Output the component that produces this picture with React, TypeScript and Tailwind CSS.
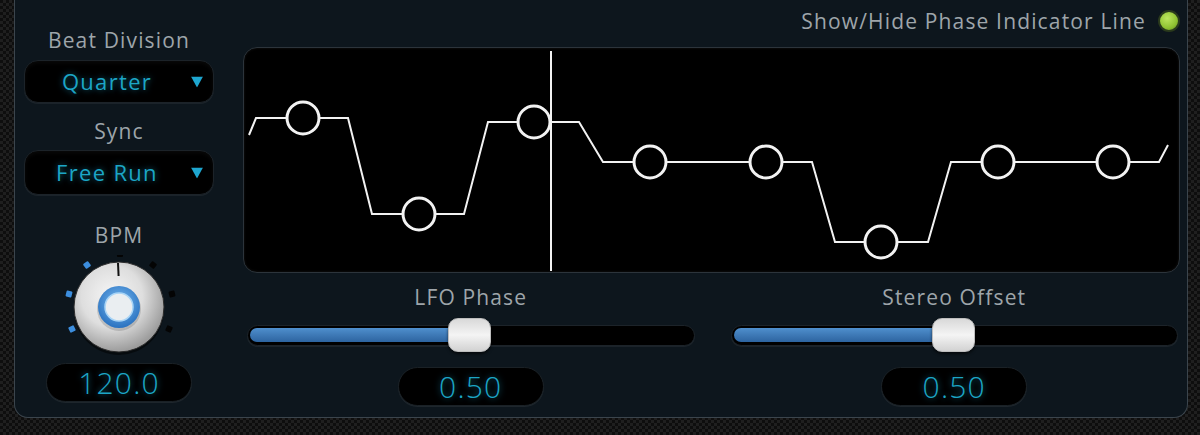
import React from "react";

const CYAN = "text-[#1ca6c6] [text-shadow:0_0_6px_rgba(30,170,215,0.6)]";
const LABEL = "text-[21px] leading-6 text-[#9ea5aa] tracking-[0.055em]";

// graph points in local coords of the black box (origin 243,47)
const wave = "M5,87 L12,70 L104,70 L128,166 L220,166 L244,74 L335,74 L359,114 L568,114 L591,194 L684,194 L707,114 L915,114 L924,97";
const nodes: [number, number][] = [
  [59, 70], [175, 166], [290, 74], [406, 114], [522, 114], [637, 194], [754, 114], [869, 114],
];

function Dropdown({ value, h }: { value: string; h: string }) {
  return (
    <div className={`relative w-[190px] ${h} rounded-[14px] bg-black border border-[#1c2329] shadow-[inset_0_2px_4px_rgba(255,255,255,0.04),0_1px_0_rgba(255,255,255,0.06)] flex items-center justify-center pr-[24px]`}>
      <span className={`text-[22px] tracking-[0.06em] ${CYAN}`}>{value}</span>
      <svg className="absolute right-[10px] top-1/2 -translate-y-1/2" width="12" height="11" viewBox="0 0 12 11">
        <path d="M0 0 L12 0 L6 11 Z" fill="#1ea6cf" />
      </svg>
    </div>
  );
}

function ValueBox({ value }: { value: string }) {
  return (
    <div className="w-[146px] h-[39px] rounded-full bg-black border border-[#1a2126] shadow-[0_1px_0_rgba(255,255,255,0.07)] flex items-center justify-center">
      <span className={`text-[30px] font-light leading-none tracking-[0.04em] ${CYAN}`}>{value}</span>
    </div>
  );
}

function Knob() {
  const blue: [number, number][] = [[-32, -42], [-50, -13], [-47, 22]];
  const dark: [number, number][] = [[1, -53], [34, -42], [53, -13], [50, 22]];
  const tick = (p: [number, number], fill: string, i: number) => {
    const a = (Math.atan2(p[1], p[0]) * 180) / Math.PI;
    return (
      <rect key={fill + i} x={60 + p[0] - 3} y={52 + p[1] - 3} width="6" height="6" rx="1" fill={fill}
        transform={`rotate(${a} ${60 + p[0]} ${52 + p[1]})`} />
    );
  };
  return (
    <svg width="120" height="104" viewBox="0 0 120 104">
      <defs>
        <radialGradient id="kb" cx="42%" cy="38%" r="62%">
          <stop offset="0%" stopColor="#f6f6f6" />
          <stop offset="55%" stopColor="#dedede" />
          <stop offset="100%" stopColor="#9c9c9c" />
        </radialGradient>
        <radialGradient id="kr" cx="50%" cy="40%" r="60%">
          <stop offset="0%" stopColor="#7bbcf2" />
          <stop offset="100%" stopColor="#2a72c0" />
        </radialGradient>
      </defs>
      {blue.map((p, i) => tick(p, "#3c8ede", i))}
      {dark.map((p, i) => tick(p, "#040404", i))}
      <circle cx="60" cy="55" r="45" fill="#000" opacity="0.5" />
      <circle cx="60" cy="52" r="45" fill="url(#kb)" stroke="#2b2b2b" strokeWidth="1" />
      <line x1="59" y1="8" x2="59.6" y2="21" stroke="#111" strokeWidth="2" />
      <circle cx="60" cy="54" r="22" fill="#000" opacity="0.15" />
      <circle cx="60" cy="52" r="21" fill="url(#kr)" />
      <circle cx="60" cy="52" r="14" fill="#eaeef1" stroke="#a8d4f6" strokeWidth="1.5" />
    </svg>
  );
}

function Slider({ label, value }: { label: string; value: string }) {
  return (
    <div className="flex flex-col items-center">
      <div className={`mt-[12px] ${LABEL}`}>{label}</div>
      <div className="relative mt-[9px] h-[34px] w-full flex items-center">
        <div className="w-full h-[21px] rounded-full bg-black border border-[#1c2329] shadow-[0_1px_0_rgba(255,255,255,0.06)] flex items-center px-[2px]">
          <div className="w-[48%] h-[14px] rounded-l-full bg-gradient-to-b from-[#4f8fcd] to-[#2d64a0]" />
        </div>
        <div className="absolute left-[45%] top-0 w-[43px] h-[34px] rounded-[10px] bg-gradient-to-b from-[#d9d9d9] via-[#f4f4f4] to-[#d2d2d2] border border-[#bdbdbd] shadow-[0_2px_3px_rgba(0,0,0,0.6)]" />
      </div>
      <div className="mt-[15px]">
        <ValueBox value={value} />
      </div>
    </div>
  );
}

export default function App() {
  return (
    <div
      className="w-[1200px] h-[435px] overflow-hidden pl-[14px] pr-[12px] pb-[17px] bg-[repeating-conic-gradient(#1f1f1f_0%_25%,#0e0e0e_0%_50%)] bg-[length:6px_6px]"
      style={{ fontFamily: '"Open Sans", "Noto Sans", sans-serif' }}
    >
      <div className="h-full rounded-b-[14px] border-x border-b border-[#3b454d] bg-[#0d161d] flex pl-[9px] pr-[9px]">
        {/* left column */}
        <div className="w-[190px] flex flex-col items-center pt-[28px]">
          <div className={LABEL}>Beat Division</div>
          <div className="mt-[8px]">
            <Dropdown value="Quarter" h="h-[43px]" />
          </div>
          <div className={`mt-[16px] ${LABEL}`}>Sync</div>
          <div className="mt-[7px]">
            <Dropdown value="Free Run" h="h-[45px]" />
          </div>
          <div className={`mt-[28px] ${LABEL}`}>BPM</div>
          <div className="mt-[8px]">
            <Knob />
          </div>
          <div className="mt-[4px]">
            <ValueBox value="120.0" />
          </div>
        </div>

        {/* right column */}
        <div className="ml-[29px] flex-1 flex flex-col">
          <div className="h-[47px] flex items-start justify-end gap-[12px] pt-[9px]">
            <span className={LABEL}>Show/Hide Phase Indicator Line</span>
            <span className="mt-[1px] w-[22px] h-[22px] rounded-full border-2 border-[#2a3a1c] bg-[radial-gradient(circle_at_40%_35%,#bde65e,#8fc232_60%,#5f8a1c)]" />
          </div>
          <div className="h-[226px] rounded-[14px] bg-black border border-[#2c343b] shadow-[inset_0_0_3px_rgba(255,255,255,0.08)] overflow-hidden">
            <svg width="935" height="226" viewBox="0 0 935 226">
              <path d={wave} fill="none" stroke="#f2f2f2" strokeWidth="2" />
              {nodes.map(([x, y], i) => (
                <circle key={i} cx={x} cy={y} r="16" fill="#000" stroke="#f2f2f2" strokeWidth="3" />
              ))}
              <line x1="307" y1="3" x2="307" y2="223" stroke="#f2f2f2" strokeWidth="2" />
            </svg>
          </div>
          <div className="grid grid-cols-2 gap-[36px] pl-[4px] pr-[2px]">
            <Slider label="LFO Phase" value="0.50" />
            <Slider label="Stereo Offset" value="0.50" />
          </div>
        </div>
      </div>
    </div>
  );
}
